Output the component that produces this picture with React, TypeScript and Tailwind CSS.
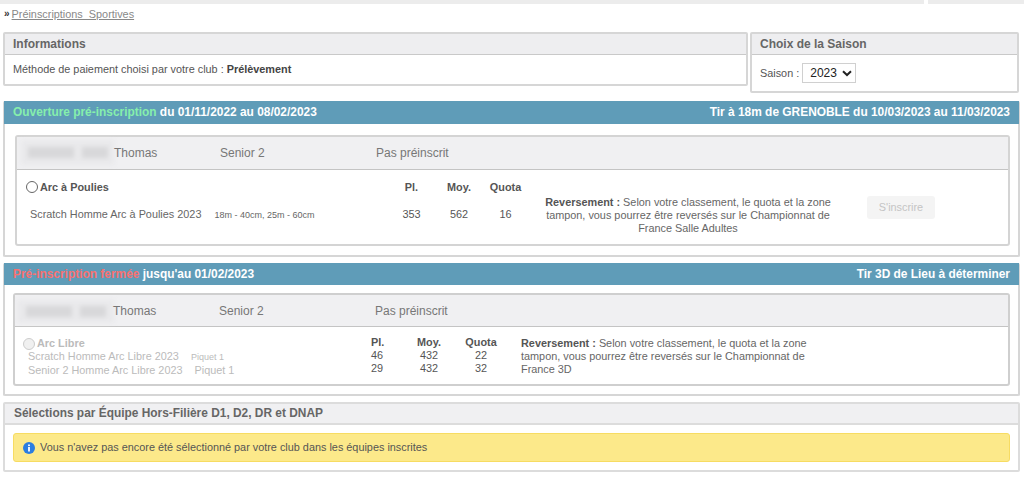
import React from "react";

const Panel = ({ title, className = "", children }: { title: string; className?: string; children: React.ReactNode }) => (
  <div className={`border-2 border-[#d6d6d6] rounded-[2px] ${className}`}>
    <div className="h-[21px] bg-[#eeeef0] border-b border-[#c9c9c9] pl-[8px] text-[12px] leading-[20px] font-bold text-[#666]">{title}</div>
    {children}
  </div>
);

const PersonRow = ({ blur, className, nameClass }: { blur: string; className: string; nameClass: string }) => (
  <div className={`relative bg-[#f0f0f2] border-b border-[#c4c4c4] flex items-center text-[12px] text-[#777] ${className}`}>
    <div className={`absolute flex gap-[8px] items-center justify-center bg-[#e9e9eb] blur-[2px] ${blur}`}>
      <div className="w-[46px] h-[11px] bg-[#d8d8da]" />
      <div className="w-[26px] h-[11px] bg-[#d8d8da]" />
    </div>
    <span className={`w-[106px] relative ${nameClass}`}>Thomas</span>
    <span className="w-[156px]">Senior 2</span>
    <span>Pas préinscrit</span>
  </div>
);

const App = () => {
  return (
    <div className="w-[1024px] h-[486px] bg-white overflow-hidden font-['Liberation_Sans',Arial,sans-serif] text-[10.87px] text-[#555]">
      <div className="flex gap-[4px] h-[4px]">
        <div className="w-[924px] bg-[#ececec]" />
        <div className="flex-1 bg-[#ececec]" />
      </div>
      <div className="h-[28px] pl-[4px] flex items-start pt-[3px] leading-[14px]">
        <span className="text-[#333] font-bold text-[10px] mr-[2px]">»</span>
        <span className="text-[#888] underline whitespace-pre">Préinscriptions  Sportives</span>
      </div>

      <div className="flex gap-[2px] pl-[3px] pr-[5px] h-[69px] items-start">
        <Panel title="Informations" className="w-[745px] h-[54px]">
          <div className="pl-[8px] pt-[7px] leading-[14px] text-[#555]">
            Méthode de paiement choisi par votre club : <b className="text-[#444]">Prélèvement</b>
          </div>
        </Panel>
        <Panel title="Choix de la Saison" className="flex-1 h-[61px]">
          <div className="flex items-center pl-[8px] pt-[8px] gap-[3px]">
            <span>Saison :</span>
            <div className="w-[54px] h-[20px] border border-[#d0d0d0] flex items-center justify-between pl-[7px] pr-[3px] text-[12px] text-[#222]">
              2023
              <svg width="10" height="7" viewBox="0 0 10 7"><path d="M1 1.2l4 3.8 4-3.8" fill="none" stroke="#222" strokeWidth="2" /></svg>
            </div>
          </div>
        </Panel>
      </div>

      <div className="mx-[3px] w-[1017px] h-[156px] border-2 border-t-0 border-[#d6d6d6] rounded-[2px]">
        <div className="-mx-[1px] h-[23px] bg-[#5f9cb8] flex justify-between px-[9px] text-white font-bold leading-[23px] text-[11.92px]">
          <span><span className="text-[#86efac]">Ouverture pré-inscription</span> du 01/11/2022 au 08/02/2023</span>
          <span>Tir à 18m de GRENOBLE du 10/03/2023 au 11/03/2023</span>
        </div>
        <div className="ml-[10px] mt-[11px] w-[995px] h-[111px] border-2 border-[#d4d4d4] rounded-[3px]">
          <PersonRow blur="left-[4px] top-[3px] w-[93px] h-[25px]" className="h-[33px]" nameClass="ml-[97px]" />
          <div className="flex">
            <div className="w-[371px] pl-[9px] pt-[10px]">
              <div className="flex items-center gap-[2px] font-bold text-[#555] h-[14px]">
                <span className="w-[12px] h-[12px] rounded-full border border-[#666]" />
                Arc à Poulies
              </div>
              <div className="pl-[4px] mt-[13px] text-[#666] leading-[14px] whitespace-nowrap">
                Scratch Homme Arc à Poulies 2023<span className="ml-[13px] text-[9px]">18m - 40cm, 25m - 60cm</span>
              </div>
            </div>
            <div className="pt-[10px] grid grid-cols-[47px_48px_45px] content-start gap-y-[13px] text-center leading-[14px]">
              <b>Pl.</b><b>Moy.</b><b>Quota</b>
              <span>353</span><span>562</span><span>16</span>
            </div>
            <div className="w-[290px] ml-[15px] pt-[26px] text-center leading-[13px] text-[#666]">
              <b className="text-[#555]">Reversement :</b> Selon votre classement, le quota et la zone tampon, vous pourrez être reversés sur le Championnat de France Salle Adultes
            </div>
            <div className="ml-[34px] mt-[26px] w-[68px] h-[23px] bg-[#f4f4f4] rounded-[3px] text-[#c4c4c4] text-center leading-[22px]">S'inscrire</div>
          </div>
        </div>
      </div>

      <div className="mx-[3px] mt-[6px] w-[1017px] h-[133px] border-2 border-t-0 border-[#d6d6d6] rounded-[2px]">
        <div className="-mx-[1px] h-[22px] bg-[#5f9cb8] flex justify-between px-[9px] text-white font-bold leading-[22px] text-[11.92px]">
          <span><span className="text-[#f87171]">Pré-inscription fermée</span> jusqu'au 01/02/2023</span>
          <span>Tir 3D de Lieu à déterminer</span>
        </div>
        <div className="ml-[8px] mt-[8px] w-[997px] h-[93px] border-2 border-[#cfcfcf] rounded-[3px]">
          <PersonRow blur="left-[2px] top-[5px] w-[97px] h-[23px]" className="h-[32px]" nameClass="ml-[98px]" />
          <div className="flex leading-[13px]">
            <div className="w-[356px] pl-[8px] pt-[10px] text-[#bbb]">
              <div className="flex items-center gap-[2px] font-bold h-[13px]">
                <span className="w-[12px] h-[12px] rounded-full border border-[#ccc] bg-[#f0f0f0]" />
                Arc Libre
              </div>
              <div className="pl-[5px]">Scratch Homme Arc Libre 2023<span className="ml-[12px] text-[9px]">Piquet 1</span></div>
              <div className="pl-[5px]">Senior 2 Homme Arc Libre 2023<span className="ml-[12px]">Piquet 1</span></div>
            </div>
            <div className="pt-[9px] grid grid-cols-[32px_52px_52px] content-start text-left leading-[13px]">
              <b>Pl.</b><b className="text-center">Moy.</b><b className="text-center">Quota</b>
              <span>46</span><span className="text-center">432</span><span className="text-center">22</span>
              <span>29</span><span className="text-center">432</span><span className="text-center">32</span>
            </div>
            <div className="w-[290px] ml-[14px] pt-[10px] leading-[13px] text-[#666]">
              <b className="text-[#555]">Reversement :</b> Selon votre classement, le quota et la zone tampon, vous pourrez être reversés sur le Championnat de France 3D
            </div>
          </div>
        </div>
      </div>

      <div className="mx-[3px] mt-[6px] w-[1017px] h-[70px] border-2 border-[#dcdcdc] rounded-[2px]">
        <div className="h-[21px] bg-[#f0f0f2] border-b-2 border-[#dcdcdc] pl-[9px] text-[11.92px] font-bold text-[#666] leading-[19px]">Sélections par Équipe Hors-Filière D1, D2, DR et DNAP</div>
        <div className="mx-[8px] mt-[8px] h-[29px] bg-[#fce98a] border border-[#f7dc62] rounded-[3px] flex items-center pl-[9px] gap-[5px] text-[#555]">
          <svg width="12" height="12" viewBox="0 0 12 12"><circle cx="6" cy="6" r="6" fill="#2b7de0" /><rect x="5.1" y="5" width="1.8" height="4.5" fill="#fff" /><rect x="5.1" y="2.5" width="1.8" height="1.6" fill="#fff" /></svg>
          Vous n'avez pas encore été sélectionné par votre club dans les équipes inscrites
        </div>
      </div>
    </div>
  );
};

export default App;
